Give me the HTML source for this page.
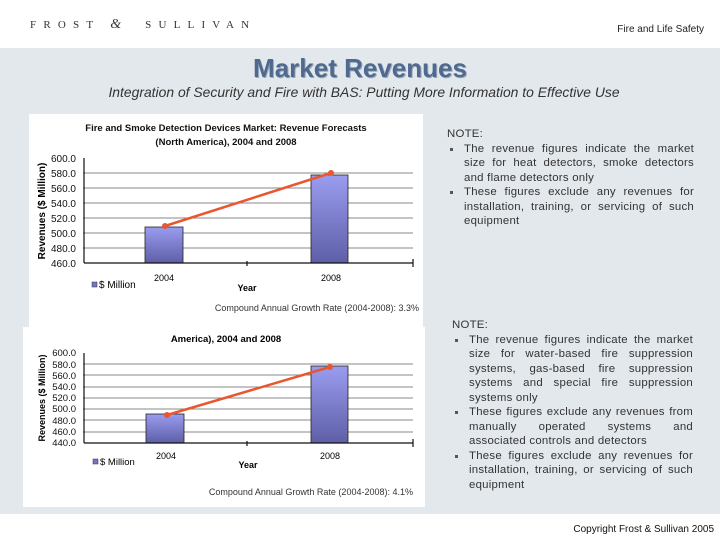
<!DOCTYPE html>
<html><head><style>
body{margin:0;width:720px;height:540px;position:relative;background:#fff;font-family:"Liberation Sans",sans-serif;overflow:hidden}
.abs{position:absolute}
.note{position:absolute;left:447px;width:247px;font-size:11.4px;line-height:14.5px;color:#333;letter-spacing:.25px}
.note ul{margin:0;padding:0;list-style:none}
.note li{position:relative;padding-left:17px;text-align:justify}
.note li:before{content:"";position:absolute;left:3px;top:6px;width:3px;height:3px;background:#555}
</style></head><body>
<div class="abs" style="left:30px;top:17px;font-family:'Liberation Serif',serif;font-size:11px;letter-spacing:7.2px;color:#333;white-space:nowrap">FROST<span style="display:inline-block;width:10px"></span><span style="font-style:italic;letter-spacing:0;font-size:14px">&amp;</span><span style="display:inline-block;width:24px"></span>SULLIVAN</div>
<div class="abs" style="right:16px;top:24px;font-size:10px;color:#222">Fire and Life Safety</div>
<div class="abs" style="left:0;top:48px;width:720px;height:466px;background:#e3e8ec"></div>
<div class="abs" style="left:0;top:53px;width:720px;text-align:center;font-size:26px;font-weight:bold;color:#4f6a8e;text-shadow:1px 1px 0 #9aa9bb">Market Revenues</div>
<div class="abs" style="left:0;top:84px;width:728px;text-align:center;font-size:13.9px;font-style:italic;color:#333">Integration of Security and Fire with BAS: Putting More Information to Effective Use</div>
<div class="abs" style="left:29px;top:114px;width:394px;height:213px;background:#fff"></div>
<div class="abs" style="left:23px;top:327px;width:402px;height:180px;background:#fff"></div>
<svg class="abs" style="left:0;top:0" width="720" height="540" font-family="Liberation Sans, sans-serif">
<defs><linearGradient id="g" x1="0" y1="0" x2="0" y2="1"><stop offset="0" stop-color="#9a9cf0"/><stop offset="1" stop-color="#5e5fa6"/></linearGradient></defs>
<g font-size="9.5" font-weight="bold" fill="#111" text-anchor="middle">
<text x="226" y="131">Fire and Smoke Detection Devices Market: Revenue Forecasts</text>
<text x="226" y="145">(North America), 2004 and 2008</text>
</g>
<g stroke="#888" stroke-width="1">
<line x1="83" y1="173" x2="413" y2="173"/><line x1="83" y1="188" x2="413" y2="188"/><line x1="83" y1="203" x2="413" y2="203"/><line x1="83" y1="218" x2="413" y2="218"/><line x1="83" y1="233" x2="413" y2="233"/><line x1="83" y1="248" x2="413" y2="248"/>
</g>
<rect x="145" y="227" width="38" height="36" fill="url(#g)" stroke="#222" stroke-width=".8"/>
<rect x="311" y="175" width="37" height="88" fill="url(#g)" stroke="#222" stroke-width=".8"/>
<g stroke="#111" stroke-width="1.2"><line x1="84" y1="158" x2="84" y2="263"/><line x1="84" y1="263" x2="413" y2="263"/><line x1="247" y1="261" x2="247" y2="266"/><line x1="413" y1="259" x2="413" y2="267"/></g>
<line x1="165" y1="226" x2="331" y2="173" stroke="#e8572f" stroke-width="2.5"/>
<circle cx="165" cy="226" r="3" fill="#e8572f"/><circle cx="331" cy="173" r="3" fill="#e8572f"/>
<g font-size="10" fill="#111" text-anchor="end">
<text x="76" y="162">600.0</text><text x="76" y="177">580.0</text><text x="76" y="192">560.0</text><text x="76" y="207">540.0</text><text x="76" y="222">520.0</text><text x="76" y="237">500.0</text><text x="76" y="252">480.0</text><text x="76" y="267">460.0</text>
</g>
<text transform="translate(45,211) rotate(-90)" font-size="10" font-weight="bold" text-anchor="middle">Revenues ($ Million)</text>
<g font-size="9" text-anchor="middle"><text x="164" y="281">2004</text><text x="331" y="281">2008</text><text x="247" y="291" font-weight="bold">Year</text></g>
<rect x="92" y="282" width="5" height="5" fill="#7475c8" stroke="#333" stroke-width=".5"/><text x="99" y="288" font-size="10">$ Million</text>
<text x="419" y="311" font-size="9" fill="#333" text-anchor="end">Compound Annual Growth Rate (2004-2008): 3.3%</text>

<text x="226" y="342" font-size="9.5" font-weight="bold" text-anchor="middle">America), 2004 and 2008</text>
<rect x="23" y="327" width="400" height="8" fill="#fff"/>
<g stroke="#888" stroke-width="1">
<line x1="83" y1="364" x2="413" y2="364"/><line x1="83" y1="375" x2="413" y2="375"/><line x1="83" y1="387" x2="413" y2="387"/><line x1="83" y1="398" x2="413" y2="398"/><line x1="83" y1="409" x2="413" y2="409"/><line x1="83" y1="420" x2="413" y2="420"/><line x1="83" y1="432" x2="413" y2="432"/>
</g>
<rect x="146" y="414" width="38" height="29" fill="url(#g)" stroke="#222" stroke-width=".8"/>
<rect x="311" y="366" width="37" height="77" fill="url(#g)" stroke="#222" stroke-width=".8"/>
<g stroke="#111" stroke-width="1.2"><line x1="84" y1="353" x2="84" y2="443"/><line x1="84" y1="443" x2="413" y2="443"/><line x1="247" y1="441" x2="247" y2="446"/><line x1="413" y1="439" x2="413" y2="447"/></g>
<line x1="167" y1="415" x2="330" y2="367" stroke="#e8572f" stroke-width="2.5"/>
<circle cx="167" cy="415" r="3" fill="#e8572f"/><circle cx="330" cy="367" r="3" fill="#e8572f"/>
<g font-size="9.5" fill="#111" text-anchor="end">
<text x="76" y="356">600.0</text><text x="76" y="368">580.0</text><text x="76" y="379">560.0</text><text x="76" y="390">540.0</text><text x="76" y="401">520.0</text><text x="76" y="412">500.0</text><text x="76" y="424">480.0</text><text x="76" y="435">460.0</text><text x="76" y="446">440.0</text>
</g>
<text transform="translate(45,398) rotate(-90)" font-size="9" font-weight="bold" text-anchor="middle">Revenues ($ Million)</text>
<g font-size="9" text-anchor="middle"><text x="166" y="459">2004</text><text x="330" y="459">2008</text><text x="248" y="468" font-weight="bold">Year</text></g>
<rect x="93" y="459" width="5" height="5" fill="#7475c8" stroke="#333" stroke-width=".5"/><text x="100" y="465" font-size="9.5">$ Million</text>
<text x="413" y="495" font-size="9" fill="#333" text-anchor="end">Compound Annual Growth Rate (2004-2008): 4.1%</text>
</svg>
<div class="note" style="top:127px">NOTE:<ul><li>The revenue figures indicate the market size for heat detectors, smoke detectors and flame detectors only</li><li>These figures exclude any revenues for installation, training, or servicing of such equipment</li></ul></div>
<div class="note" style="top:318px;left:452px;width:241px">NOTE:<ul><li>The revenue figures indicate the market size for water-based fire suppression systems, gas-based fire suppression systems and special fire suppression systems only</li><li>These figures exclude any revenues from manually operated systems and associated controls and detectors</li><li>These figures exclude any revenues for installation, training, or servicing of such equipment</li></ul></div>
<div class="abs" style="right:6px;top:524px;font-size:10px;color:#111">Copyright Frost &amp; Sullivan 2005</div>
</body></html>
